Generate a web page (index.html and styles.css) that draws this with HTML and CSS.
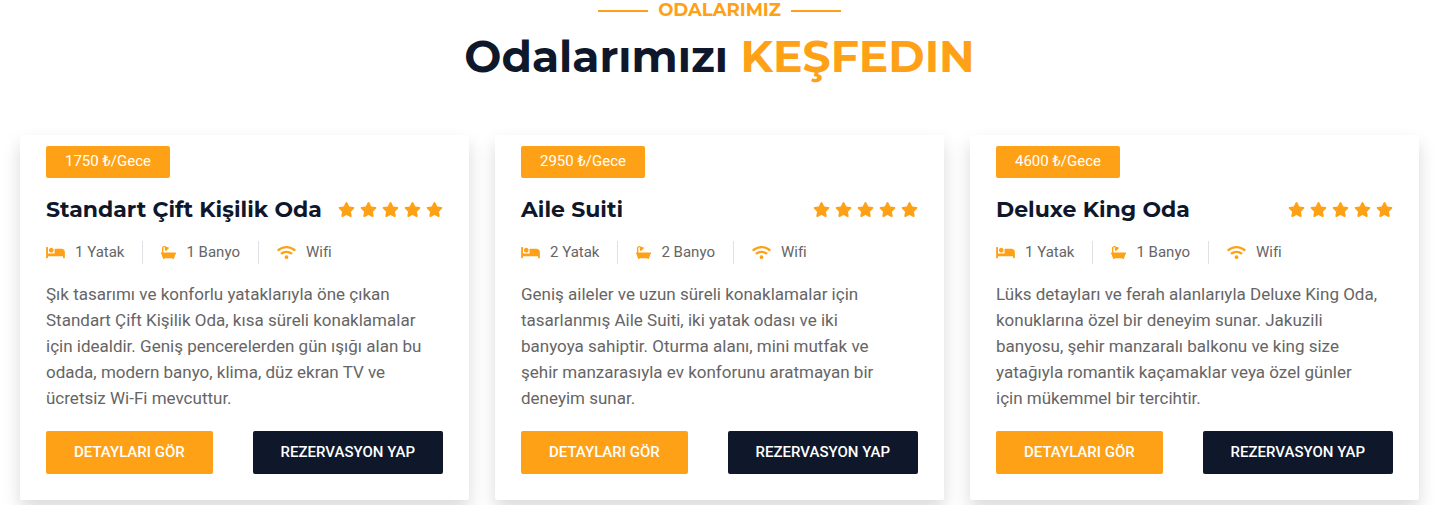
FILE: index.html
```
<!DOCTYPE html>
<html lang="tr">
<head>
<meta charset="utf-8">
<meta name="viewport" content="width=device-width, initial-scale=1">
<title>Odalarımız</title>
<link rel="stylesheet" href="styles.css">
</head>
<body>
<svg class="sprite" aria-hidden="true">
  <symbol id="star" viewBox="0 0 576 512"><path d="M259.3 17.8L194 150.2 47.9 171.5c-26.2 3.8-36.7 36.1-17.7 54.6l105.7 103-25 145.5c-4.5 26.3 23.2 46 46.4 33.7L288 439.6l130.7 68.7c23.2 12.2 50.9-7.4 46.4-33.7l-25-145.5 105.7-103c19-18.5 8.5-50.8-17.7-54.6L382 150.2 316.7 17.8c-11.7-23.6-45.6-23.9-57.4 0z"/></symbol>
  <symbol id="bed" viewBox="0 0 640 512"><path d="M176 256c44.11 0 80-35.89 80-80s-35.89-80-80-80-80 35.89-80 80 35.89 80 80 80zm352-128H304c-8.84 0-16 7.16-16 16v144H64V80c0-8.84-7.16-16-16-16H16C7.16 64 0 71.16 0 80v352c0 8.84 7.16 16 16 16h32c8.84 0 16-7.16 16-16v-48h512v48c0 8.84 7.16 16 16 16h32c8.84 0 16-7.16 16-16V240c0-61.86-50.14-112-112-112z"/></symbol>
  <symbol id="bath" viewBox="0 0 512 512"><path d="M488 256H80V112c0-17.645 14.355-32 32-32 11.351 0 21.332 5.945 27.015 14.88-16.492 25.207-14.687 59.576 6.838 83.035-4.176 4.713-4.021 11.916.491 16.428l11.314 11.314c4.686 4.686 12.284 4.686 16.971 0l95.03-95.029c4.686-4.686 4.686-12.284 0-16.971l-11.314-11.314c-4.512-4.512-11.715-4.666-16.428-.491-17.949-16.469-42.294-21.429-64.178-15.365C163.281 45.667 139.212 32 112 32c-44.112 0-80 35.888-80 80v144h-8c-13.255 0-24 10.745-24 24v16c0 13.255 10.745 24 24 24h8v32c0 28.43 12.362 53.969 32 71.547V456c0 13.255 10.745 24 24 24h16c13.255 0 24-10.745 24-24v-8h256v8c0 13.255 10.745 24 24 24h16c13.255 0 24-10.745 24-24v-32.453c19.638-17.578 32-43.117 32-71.547v-32h8c13.255 0 24-10.745 24-24v-16c0-13.255-10.745-24-24-24z"/></symbol>
  <symbol id="wifi" viewBox="0 0 640 512"><path d="M634.91 154.88C457.74-8.99 182.19-8.93 5.09 154.88c-6.66 6.16-6.79 16.59-.35 22.98l34.24 33.97c6.14 6.1 16.02 6.23 22.4.38 145.92-133.68 371.3-133.71 517.25 0 6.38 5.85 16.26 5.71 22.4-.38l34.24-33.97c6.43-6.39 6.3-16.82-.36-22.98zM320 352c-35.35 0-64 28.65-64 64s28.65 64 64 64 64-28.65 64-64-28.65-64-64-64zm202.67-83.59c-115.26-101.93-290.21-101.82-405.34 0-6.9 6.1-7.12 16.69-.57 23.15l34.44 33.99c6 5.92 15.66 6.32 22.05.8 83.95-72.57 209.74-72.41 293.49 0 6.39 5.52 16.05 5.13 22.05-.8l34.44-33.99c6.56-6.46 6.33-17.06-.56-23.15z"/></symbol>
</svg>
<section class="rooms">
  <header class="rooms-header">
    <h6 class="eyebrow">ODALARIMIZ</h6>
    <h1 class="headline">Odalarımızı <span class="accent">KEŞFEDIN</span></h1>
  </header>
  <div class="room-grid">
    <article class="room-card">
      <span class="price">1750 ₺/Gece</span>
      <div class="title-row">
        <h5 class="room-title">Standart Çift Kişilik Oda</h5>
        <div class="stars" role="img" aria-label="5 yıldız"><svg class="icon-star"><use href="#star"/></svg><svg class="icon-star"><use href="#star"/></svg><svg class="icon-star"><use href="#star"/></svg><svg class="icon-star"><use href="#star"/></svg><svg class="icon-star"><use href="#star"/></svg></div>
      </div>
      <ul class="features">
        <li class="feature"><svg class="icon-wide"><use href="#bed"/></svg>1 Yatak</li>
        <li class="feature"><svg class="icon"><use href="#bath"/></svg>1 Banyo</li>
        <li class="feature"><svg class="icon-wide"><use href="#wifi"/></svg>Wifi</li>
      </ul>
      <p class="description">Şık tasarımı ve konforlu yataklarıyla öne çıkan Standart Çift Kişilik Oda, kısa süreli konaklamalar için idealdir. Geniş pencerelerden gün ışığı alan bu odada, modern banyo, klima, düz ekran TV ve ücretsiz Wi-Fi mevcuttur.</p>
      <div class="actions"><a class="btn btn-primary" href="#detay-standart">DETAYLARI GÖR</a><a class="btn btn-dark" href="#rezervasyon-standart">REZERVASYON YAP</a></div>
    </article>
    <article class="room-card">
      <span class="price">2950 ₺/Gece</span>
      <div class="title-row">
        <h5 class="room-title">Aile Suiti</h5>
        <div class="stars" role="img" aria-label="5 yıldız"><svg class="icon-star"><use href="#star"/></svg><svg class="icon-star"><use href="#star"/></svg><svg class="icon-star"><use href="#star"/></svg><svg class="icon-star"><use href="#star"/></svg><svg class="icon-star"><use href="#star"/></svg></div>
      </div>
      <ul class="features">
        <li class="feature"><svg class="icon-wide"><use href="#bed"/></svg>2 Yatak</li>
        <li class="feature"><svg class="icon"><use href="#bath"/></svg>2 Banyo</li>
        <li class="feature"><svg class="icon-wide"><use href="#wifi"/></svg>Wifi</li>
      </ul>
      <p class="description">Geniş aileler ve uzun süreli konaklamalar için tasarlanmış Aile Suiti, iki yatak odası ve iki banyoya sahiptir. Oturma alanı, mini mutfak ve şehir manzarasıyla ev konforunu aratmayan bir deneyim sunar.</p>
      <div class="actions"><a class="btn btn-primary" href="#detay-aile">DETAYLARI GÖR</a><a class="btn btn-dark" href="#rezervasyon-aile">REZERVASYON YAP</a></div>
    </article>
    <article class="room-card">
      <span class="price">4600 ₺/Gece</span>
      <div class="title-row">
        <h5 class="room-title">Deluxe King Oda</h5>
        <div class="stars" role="img" aria-label="5 yıldız"><svg class="icon-star"><use href="#star"/></svg><svg class="icon-star"><use href="#star"/></svg><svg class="icon-star"><use href="#star"/></svg><svg class="icon-star"><use href="#star"/></svg><svg class="icon-star"><use href="#star"/></svg></div>
      </div>
      <ul class="features">
        <li class="feature"><svg class="icon-wide"><use href="#bed"/></svg>1 Yatak</li>
        <li class="feature"><svg class="icon"><use href="#bath"/></svg>1 Banyo</li>
        <li class="feature"><svg class="icon-wide"><use href="#wifi"/></svg>Wifi</li>
      </ul>
      <p class="description">Lüks detayları ve ferah alanlarıyla Deluxe King Oda, konuklarına özel bir deneyim sunar. Jakuzili banyosu, şehir manzaralı balkonu ve king size yatağıyla romantik kaçamaklar veya özel günler için mükemmel bir tercihtir.</p>
      <div class="actions"><a class="btn btn-primary" href="#detay-deluxe">DETAYLARI GÖR</a><a class="btn btn-dark" href="#rezervasyon-deluxe">REZERVASYON YAP</a></div>
    </article>
  </div>
</section>
</body>
</html>
```
FILE: styles.css
```
* {
  box-sizing: border-box;
}

body {
  margin: 0;
  background: #fff;
  color: #666565;
  font-family: Roboto, "Liberation Sans", sans-serif;
  font-size: 17px;
  line-height: 26px;
}

.sprite {
  display: none;
}

.rooms {
  padding: 0 21px 5px 20px;
  overflow: hidden;
}

.rooms-header {
  display: flex;
  flex-direction: column;
  align-items: center;
  gap: 8px;
  margin-bottom: 52px;
}

.eyebrow,
.headline,
.room-title {
  margin: 0;
  font-family: Montserrat, Inter, sans-serif;
}

.eyebrow {
  display: flex;
  align-items: center;
  gap: 10px;
  color: #fea116;
  font-size: 18px;
  font-weight: 700;
  line-height: 21px;
}

.eyebrow::before,
.eyebrow::after {
  content: "";
  width: 50px;
  height: 2px;
  background: #fea116;
}

.headline {
  color: #0f172b;
  font-size: 44px;
  font-weight: 700;
  line-height: 54px;
}

.accent {
  color: #fea116;
}

.room-grid {
  display: grid;
  grid-template-columns: repeat(3, minmax(0, 1fr));
  gap: 26px;
}

.room-card {
  padding: 11px 26px 26px;
  border-radius: 2px;
  background: #fff;
  box-shadow: 0 9px 18px rgba(0, 0, 0, 0.15);
}

.price {
  display: block;
  width: fit-content;
  padding: 2px 19px 4px;
  border-radius: 2px;
  background: #fea116;
  color: #fff;
  font-size: 15px;
}

.title-row {
  display: flex;
  align-items: flex-start;
  justify-content: space-between;
  margin-top: 19px;
}

.room-title {
  color: #0f172b;
  font-size: 22px;
  font-weight: 700;
  white-space: nowrap;
}

.stars {
  display: flex;
  gap: 5px;
  padding-top: 5px;
}

.icon-star,
.icon,
.icon-wide {
  flex: none;
  height: 15px;
  color: #fea116;
  fill: currentColor;
}

.icon-star {
  width: 17px;
}

.icon {
  width: 15px;
}

.icon-wide {
  width: 19px;
}

.features {
  display: flex;
  margin: 18px 0 17px;
  padding: 0;
  list-style: none;
  font-size: 15px;
  line-height: 23px;
}

.feature {
  display: flex;
  align-items: center;
  gap: 10px;
}

.feature + .feature {
  margin-left: 18px;
  padding-left: 18px;
  border-left: 1px solid #dee2e6;
}

.description {
  margin: 0 0 20px;
  padding-right: 14px;
}

.actions {
  display: flex;
  justify-content: space-between;
}

.btn {
  padding: 10px 28px;
  border-radius: 2px;
  color: #fff;
  font-size: 15px;
  font-weight: 500;
  line-height: 23px;
  text-decoration: none;
}

.btn-primary {
  background: #fea116;
}

.btn-dark {
  background: #0f172b;
}
```
